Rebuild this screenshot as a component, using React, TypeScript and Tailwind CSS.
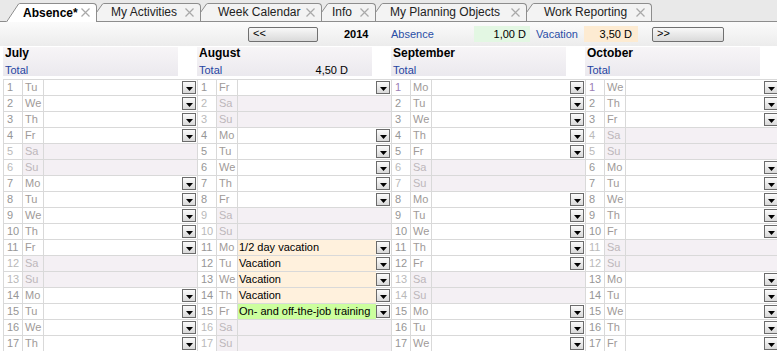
import React from "react";

const DAYS = ["Mo", "Tu", "We", "Th", "Fr", "Sa", "Su"];

type Entry = { text: string; bg: string };
type Month = {
  name: string;
  start: number;
  total?: string;
  purpleFirst?: boolean;
  entries?: Record<number, Entry>;
};

const MONTHS: Month[] = [
  { name: "July", start: 1 },
  {
    name: "August",
    start: 4,
    total: "4,50 D",
    entries: {
      11: { text: "1/2 day vacation", bg: "bg-[#fff1dd]" },
      12: { text: "Vacation", bg: "bg-[#fff1dd]" },
      13: { text: "Vacation", bg: "bg-[#fff1dd]" },
      14: { text: "Vacation", bg: "bg-[#fff1dd]" },
      15: { text: "On- and off-the-job training", bg: "bg-[#ccff9e]" },
    },
  },
  { name: "September", start: 0, purpleFirst: true },
  { name: "October", start: 2, purpleFirst: true },
];

const TABS = [
  { label: "Absence*", active: true, w: "w-[77px]", pl: "pl-[3px]", z: "z-[7]" },
  { label: "My Activities", w: "w-[97px]", pl: "pl-[7px]", z: "z-[5]" },
  { label: "Week Calendar", w: "w-[114px]", pl: "pl-[10px]", z: "z-[4]" },
  { label: "Info", w: "w-[47px]", pl: "pl-[3px]", z: "z-[3]" },
  { label: "My Planning Objects", w: "w-[144px]", pl: "pl-[7px]", z: "z-[2]" },
  { label: "Work Reporting", w: "w-[118px]", pl: "pl-[10px]", z: "z-[1]" },
];

function CloseX() {
  return (
    <svg width="9" height="9" viewBox="0 0 9 9" className="shrink-0">
      <path d="M0.5 0.5L8.5 8.5M8.5 0.5L0.5 8.5" stroke="#a9a9a9" strokeWidth="1.2" />
    </svg>
  );
}

function Tab({ t, first }: { t: (typeof TABS)[number]; first: boolean }) {
  const h = t.active ? 19 : 18;
  const fill = t.active ? "#ffffff" : "#f3f3f3";
  return (
    <div className={`relative flex ${t.z} ${first ? "" : "-ml-[7px]"} ${t.active ? "-mb-px h-[19px]" : "h-[18px]"}`}>
      <svg width="14" height={h} viewBox={`0 0 14 ${h}`} className="shrink-0">
        <path d={`M0 ${h} L12.5 1 Q13.3 0.5 14 0.5 L14 ${h} Z`} fill={fill} />
        <path d={`M0.5 ${h} L12.5 1 Q13.3 0.5 14 0.5`} fill="none" stroke="#8d8d8d" strokeWidth="1" />
      </svg>
      <div
        className={`flex items-center ${t.w} ${t.pl} rounded-tr-[4px] border-t border-r border-[#8d8d8d] ${
          t.active ? "bg-white font-bold text-black" : "bg-[#f3f3f3] text-[#222]"
        } pb-[1px] text-[12px]`}
      >
        <span className="whitespace-nowrap">{t.label}</span>
        <span className="ml-auto mr-[6px] flex">
          <CloseX />
        </span>
      </div>
    </div>
  );
}

function Drop() {
  return (
    <div className="mt-px flex h-[13px] w-[14px] items-end justify-center border border-[#6b6b6b] bg-linear-to-b from-[#fbfbfb] to-[#d9d9d9] pb-[2px]">
      <svg width="7" height="4" viewBox="0 0 7 4">
        <path d="M0 0H7L3.5 4Z" fill="#000" />
      </svg>
    </div>
  );
}

function Row({ n, m }: { n: number; m: Month }) {
  const wd = (m.start + n - 1) % 7;
  const weekend = wd >= 5;
  const entry = m.entries?.[n];
  const numColor = m.purpleFirst && n === 1 ? "text-[#9a80b4]" : weekend ? "text-[#b9b9b9]" : "text-[#969696]";
  const dayColor = weekend ? "text-[#bdb7bb]" : "text-[#a09a98]";
  return (
    <div className={`flex h-[16px] border-t border-[#d9d9d9] leading-[15px] ${weekend ? "bg-[#f4f0f4]" : ""}`}>
      <div className={`w-[20px] shrink-0 border-x border-[#d9d9d9] bg-white pl-[3px] ${numColor}`}>{n}</div>
      <div className={`w-[21px] shrink-0 border-r border-[#d9d9d9] pl-[2px] ${dayColor}`}>{DAYS[wd]}</div>
      <div className={`flex-1 overflow-hidden whitespace-nowrap pl-px text-black ${entry ? entry.bg : ""}`}>
        {entry?.text}
      </div>
      <div className="w-[15px] shrink-0">{!weekend && <Drop />}</div>
    </div>
  );
}

function MonthCol({ m }: { m: Month }) {
  return (
    <div className="flex w-[194px] shrink-0 flex-col">
      <div className="h-[33px] pt-px">
        <div className="h-[29px] w-[175px] bg-linear-to-b from-[#f7f5f7] to-[#ebe9ee] pl-[2px]">
          <div className="text-[12px] font-bold leading-[13px] text-black">{m.name}</div>
          <div className="mt-[3px] flex justify-between pr-[24px] leading-[14px]">
            <span className="text-[#2544a2]">Total</span>
            <span className="text-black">{m.total}</span>
          </div>
        </div>
      </div>
      {Array.from({ length: 17 }, (_, i) => (
        <Row key={i} n={i + 1} m={m} />
      ))}
    </div>
  );
}

function NavButton({ label, w }: { label: string; w: string }) {
  return (
    <div
      className={`h-[15px] ${w} rounded-[2px] border border-[#707070] bg-linear-to-b from-[#f8f8f8] to-[#dadada] pl-[4px] text-[11px] leading-[11px] text-black`}
    >
      {label}
    </div>
  );
}

export default function App() {
  return (
    <div className="h-[352px] w-[777px] overflow-hidden bg-white font-['Liberation_Sans',Arial,sans-serif] text-[11px]">
      {/* tab strip */}
      <div className="flex h-[22px] items-end border-b border-[#8d8d8d] bg-[#e9e9e9] pl-[6px]">
        {TABS.map((t, i) => (
          <Tab key={t.label} t={t} first={i === 0} />
        ))}
      </div>

      {/* toolbar */}
      <div className="flex h-[24px] items-center bg-linear-to-b from-[#fbfbfb] to-[#ececec] pl-[248px]">
        <NavButton label="<<" w="w-[70px]" />
        <span className="w-[73px] pl-[26px] font-bold text-black">2014</span>
        <span className="w-[83px] text-[#2a4ea6]">Absence</span>
        <div className="h-[16px] w-[56px] bg-[#e3f7e3] pr-[4px] text-right leading-[16px] text-black">1,00 D</div>
        <span className="w-[54px] pl-[6px] text-[#2a4ea6]">Vacation</span>
        <div className="h-[16px] w-[54px] bg-[#fdebd2] pr-[6px] text-right leading-[16px] text-black">3,50 D</div>
        <div className="ml-[14px]">
          <NavButton label=">>" w="w-[72px]" />
        </div>
      </div>

      {/* months */}
      <div className="flex pl-[3px]">
        {MONTHS.map((m) => (
          <MonthCol key={m.name} m={m} />
        ))}
      </div>
    </div>
  );
}
